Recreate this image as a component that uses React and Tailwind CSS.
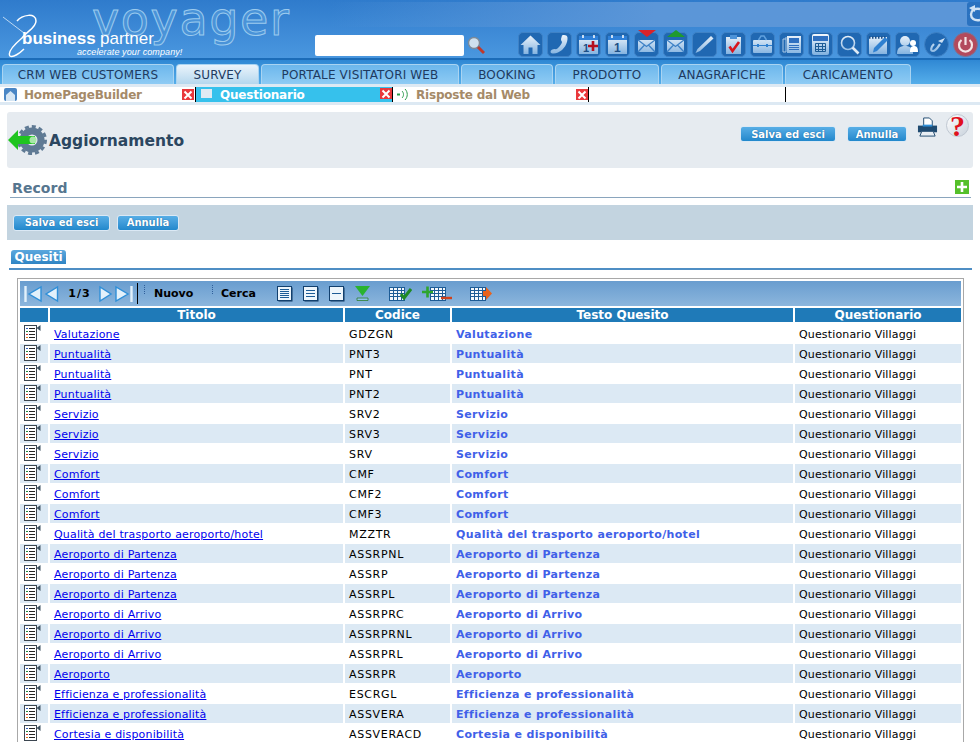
import React from 'react';

const rows = [
  ['Valutazione', 'GDZGN', 'Valutazione'],
  ['Puntualità', 'PNT3', 'Puntualità'],
  ['Puntualità', 'PNT', 'Puntualità'],
  ['Puntualità', 'PNT2', 'Puntualità'],
  ['Servizio', 'SRV2', 'Servizio'],
  ['Servizio', 'SRV3', 'Servizio'],
  ['Servizio', 'SRV', 'Servizio'],
  ['Comfort', 'CMF', 'Comfort'],
  ['Comfort', 'CMF2', 'Comfort'],
  ['Comfort', 'CMF3', 'Comfort'],
  ['Qualità del trasporto aeroporto/hotel', 'MZZTR', 'Qualità del trasporto aeroporto/hotel'],
  ['Aeroporto di Partenza', 'ASSRPNL', 'Aeroporto di Partenza'],
  ['Aeroporto di Partenza', 'ASSRP', 'Aeroporto di Partenza'],
  ['Aeroporto di Partenza', 'ASSRPL', 'Aeroporto di Partenza'],
  ['Aeroporto di Arrivo', 'ASSRPRC', 'Aeroporto di Arrivo'],
  ['Aeroporto di Arrivo', 'ASSRPRNL', 'Aeroporto di Arrivo'],
  ['Aeroporto di Arrivo', 'ASSRPRL', 'Aeroporto di Arrivo'],
  ['Aeroporto', 'ASSRPR', 'Aeroporto'],
  ['Efficienza e professionalità', 'ESCRGL', 'Efficienza e professionalità'],
  ['Efficienza e professionalità', 'ASSVERA', 'Efficienza e professionalità'],
  ['Cortesia e disponibilità', 'ASSVERACD', 'Cortesia e disponibilità'],
];

const tabs = [
  ['CRM WEB CUSTOMERS', 'w-[172px]'],
  ['SURVEY', 'w-[83px]'],
  ['PORTALE VISITATORI WEB', 'w-[198px]'],
  ['BOOKING', 'w-[92px]'],
  ['PRODOTTO', 'w-[104px]'],
  ['ANAGRAFICHE', 'w-[122px]'],
  ['CARICAMENTO', 'w-[126px]'],
];

const W = 'url(#hg)';

function HeaderIcon({ children, round }) {
  return (
    <div className={`w-[25px] h-[25px] shrink-0 border border-[#3f82c6] bg-[#2068b2] flex items-center justify-center ${round ? 'rounded-full' : 'rounded-[5px]'}`}>
      <svg width="21" height="21" viewBox="0 0 21 21">{children}</svg>
    </div>
  );
}

function Envelope() {
  return (
    <HeaderIcon>
      <rect x="2" y="6" width="17" height="12" fill={W} />
      <path d="M2 6l8.5 6.5L19 6M2 18l6.5-7M19 18l-6.5-7" stroke="#3f82c6" strokeWidth="1.3" fill="none" />
    </HeaderIcon>
  );
}

function HeaderIcons() {
  return (
    <div className="flex gap-[4px] items-center">
      <HeaderIcon><path d="M10.5 1.5 L20.5 11 H17.5 V20 H12.5 V13.5 H8.5 V20 H3.5 V11 H0.5 Z" fill={W} /></HeaderIcon>
      <HeaderIcon><path d="M13 1.5 C15 0.5 18 1 18.5 3.5 C19 9 15 16 9 18.5 C6 20 2 20 1.5 18 C1.5 16 3.5 15 6 15 C7.5 15.5 8 15 9 14 C11 12 13 9.5 13 8 C12.5 7 12 6.5 12 5 Z" fill={W} /></HeaderIcon>
      <HeaderIcon>
        <rect x="1" y="2" width="19" height="18" fill={W} /><rect x="1" y="2" width="19" height="4" fill="#2f80d8" />
        <path d="M5 1v3M16 1v3" stroke="#fff" strokeWidth="1.5" />
        <text x="5" y="18" fontSize="11" fontWeight="700" fill="#1d4f86" fontFamily="Liberation Sans">1</text>
        <path d="M10 12h10M15 7v10" stroke="#b5101e" strokeWidth="2.6" />
      </HeaderIcon>
      <HeaderIcon>
        <rect x="1" y="2" width="19" height="18" fill={W} /><rect x="1" y="2" width="19" height="4" fill="#2f80d8" />
        <path d="M5 1v3M16 1v3" stroke="#fff" strokeWidth="1.5" />
        <text x="7" y="18" fontSize="12" fontWeight="700" fill="#1d4f86" fontFamily="Liberation Sans">1</text>
      </HeaderIcon>
      <div className="relative">
        <Envelope />
        <div className="absolute left-[4px] top-[-2px] w-0 h-0 border-l-[9px] border-r-[9px] border-t-[7px] border-l-transparent border-r-transparent border-t-[#d8232a]" />
      </div>
      <div className="relative">
        <Envelope />
        <div className="absolute left-[4px] top-[-2px] w-0 h-0 border-l-[9px] border-r-[9px] border-b-[7px] border-l-transparent border-r-transparent border-b-[#1f9a2e]" />
      </div>
      <HeaderIcon><path d="M17 2l2.5 2.5L6 17l-4.5 2L3.5 15z" fill={W} /></HeaderIcon>
      <HeaderIcon>
        <rect x="3" y="3" width="15" height="17" fill={W} /><rect x="7" y="1" width="7" height="4" fill="#4d93d8" />
        <path d="M6.5 12.5l3 4.5 6.5-9" stroke="#d8141c" strokeWidth="2.6" fill="none" />
      </HeaderIcon>
      <HeaderIcon>
        <rect x="1" y="6" width="19" height="13" rx="1" fill={W} /><path d="M6.5 6l2.5-4h3l2.5 4" stroke="#5fa0de" fill="none" strokeWidth="1.5" />
        <path d="M1 11.5h19" stroke="#2f80d0" /><rect x="5" y="10" width="2" height="3" fill="#2f80d0" /><rect x="14" y="10" width="2" height="3" fill="#2f80d0" />
      </HeaderIcon>
      <HeaderIcon>
        <rect x="6" y="2" width="14" height="17" fill={W} /><path d="M2 5h3v13H2zM4 4h2" fill="none" stroke="#a9c8e6" />
        <rect x="8" y="4" width="10" height="5" fill="#2f70c0" /><path d="M8 11.5h10M8 13.5h10M8 15.5h10" stroke="#2f70c0" />
      </HeaderIcon>
      <HeaderIcon>
        <rect x="2" y="0" width="17" height="21" rx="2" fill={W} /><rect x="3" y="2" width="15" height="5" fill="#2f70c0" />
        <path d="M5.5 9.5h10v8h-10zM5.5 12.5h10M5.5 15.5h10M8.5 9.5v8M12.5 9.5v8" stroke="#1d5c96" fill="none" />
      </HeaderIcon>
      <HeaderIcon><circle cx="9" cy="9" r="6.5" fill="none" stroke={W} strokeWidth="1.6" /><path d="M13.5 13.5l6 6" stroke="#dfeaf5" strokeWidth="2.6" /></HeaderIcon>
      <HeaderIcon>
        <rect x="1" y="3" width="18" height="17" fill={W} /><path d="M1 3.5h18" stroke="#1d4f86" strokeWidth="2.4" strokeDasharray="1.5 1.5" />
        <path d="M20 6L9 17l-4 1.5L6 14 17 3z" fill="#2f80d0" />
      </HeaderIcon>
      <HeaderIcon>
        <circle cx="8" cy="7" r="5" fill={W} /><path d="M0 20c0-6 3-8 8-8s8 2 8 8z" fill={W} />
        <circle cx="16" cy="9" r="3" fill="#fff" /><path d="M13 18c0-4 1-6 4-6s4 2 4 6z" fill="#fff" />
      </HeaderIcon>
      <HeaderIcon round>
        <path d="M8 10C5 13 4 17 7 17C10 17 12 13 14 10" stroke={W} strokeWidth="2.2" fill="none" />
        <path d="M12 7l7-3-3 5z" fill={W} />
      </HeaderIcon>
      <div className="w-[25px] h-[25px] rounded-full bg-[#b34a5c] border border-[#7a7598] flex items-center justify-center">
        <svg width="19" height="19" viewBox="0 0 19 19">
          <path d="M5.5 5a6.5 6.5 0 1 0 8 0" stroke="#f4e4e4" strokeWidth="2.2" fill="none" />
          <path d="M9.5 2v8" stroke="#f4e4e4" strokeWidth="2.2" />
        </svg>
      </div>
    </div>
  );
}

function CloseBox() {
  return (
    <div className="w-[12px] h-[11px] shrink-0 bg-[#e9383c] flex items-center justify-center">
      <svg width="10" height="10" viewBox="0 0 10 10"><path d="M1.5 1.5l7 7M8.5 1.5l-7 7" stroke="#fff" strokeWidth="2" /></svg>
    </div>
  );
}

function BlueBtn({ children, w }) {
  return (
    <button className={`${w} h-[16px] rounded-[3px] border border-[#dbe9f5] bg-gradient-to-b from-[#57aee6] to-[#2188cc] text-white text-[10px] font-bold leading-[13px] text-center [text-shadow:0_0_1px_#0b4f88]`}>
      {children}
    </button>
  );
}

function RowIcon() {
  return (
    <svg width="17" height="16" viewBox="0 0 17 16">
      <rect x="0.5" y="0.5" width="12" height="15" fill="#fff" stroke="#3c4650" />
      <path d="M2 3.5h2" stroke="#2f5fc0" />
      <path d="M2 6.5h2" stroke="#1f8a3a" />
      <path d="M2 9.5h2" stroke="#c03030" />
      <path d="M2 12.5h2" stroke="#e07010" />
      <path d="M5 3.5h6M5 6.5h6M5 9.5h6M5 12.5h6" stroke="#222" />
      <path d="M16.5 0v6l-4-3z" fill="#3c5060" />
    </svg>
  );
}

function TableIcon({ x = 0 }) {
  return (
    <g transform={`translate(${x} 2)`}>
      <rect x="0" y="0.5" width="15" height="13" fill="#f4f8fc" stroke="#1d5c96" />
      <path d="M0 3.5h15M0 6.5h15M0 9.5h15M4 0v14M8 0v14M12 0v14" stroke="#1d5c96" />
    </g>
  );
}

function Lines({ count }) {
  const ys = count === 5 ? [3.5, 5.5, 7.5, 9.5, 11.5] : count === 3 ? [4.5, 7.5, 10.5] : [7.5];
  return (
    <svg width="16" height="16" viewBox="0 0 16 16">
      <rect x="1.5" y="1.5" width="14" height="14" fill="#0e3760" />
      <rect x="0.5" y="0.5" width="14" height="14" fill="#eef6fc" stroke="#12406e" />
      {ys.map((y) => (
        <path key={y} d={`M3 ${y}h9`} stroke="#1d5c96" />
      ))}
    </svg>
  );
}

function Toolbar() {
  return (
    <div className="h-[25px] flex items-center bg-gradient-to-b from-[#699dcf] to-[#8cb6dd] text-[11px] font-bold text-black">
      <svg width="35" height="18" viewBox="0 0 35 18" className="ml-[4px]">
        <path d="M1.5 1v16" stroke="#e3f1fb" strokeWidth="2.4" />
        <path d="M17 2v14L5 9z" fill="#e3f1fb" stroke="#2f8fd8" strokeWidth="1.4" />
        <path d="M33.5 2v14L22 9z" fill="#e3f1fb" stroke="#2f8fd8" strokeWidth="1.4" />
      </svg>
      <span className="ml-[9px] w-[23px] text-center tracking-[1px] pt-[2px]">1/3</span>
      <svg width="34" height="18" viewBox="0 0 34 18" className="ml-[8px]">
        <path d="M1 2v14l11-7z" fill="#e3f1fb" stroke="#2f8fd8" strokeWidth="1.4" />
        <path d="M17 2v14l12-7z" fill="#e3f1fb" stroke="#2f8fd8" strokeWidth="1.4" />
        <path d="M32.5 1v16" stroke="#e3f1fb" strokeWidth="2.4" />
      </svg>
      <div className="ml-[4px] w-px h-[21px] bg-black" />
      <div className="ml-[6px] w-[3px] h-[9px] mb-[8px] border-l border-dotted border-[#2f5f9a]" />
      <span className="ml-[7px] w-[58px] pt-[2px]">Nuovo</span>
      <div className="w-[3px] h-[9px] mb-[8px] border-l border-dotted border-[#2f5f9a]" />
      <span className="ml-[6px] w-[56px] pt-[2px]">Cerca</span>
      <div className="flex items-center gap-[10px]">
        <Lines count={5} />
        <Lines count={3} />
        <Lines count={1} />
      </div>
      <svg width="15" height="17" viewBox="0 0 15 17" className="ml-[10px]">
        <path d="M0 1h15L7.5 11z" fill="#29b32e" />
        <path d="M2 13h11v2.5H2z" fill="#8fc4ea" stroke="#2d7f30" strokeWidth="0.8" />
      </svg>
      <svg width="23" height="18" viewBox="0 0 23 18" className="ml-[19px]">
        <TableIcon x={0.5} />
        <path d="M12 9l3 4 7-9" stroke="#1f8a24" strokeWidth="3" fill="none" />
      </svg>
      <svg width="30" height="18" viewBox="0 0 30 18" className="ml-[10px]">
        <TableIcon x={8.5} />
        <path d="M0 7h11M5.5 1.500v11" stroke="#2ea52e" strokeWidth="2.6" />
        <path d="M19 13h11" stroke="#d0421c" strokeWidth="2.4" />
      </svg>
      <svg width="22" height="18" viewBox="0 0 22 18" className="ml-[18px]">
        <TableIcon x={0.5} />
        <path d="M13 6h3V2l6 6.500-6 6.500v-4h-3z" fill="#e8621c" />
      </svg>
    </div>
  );
}

const gridCols = 'grid grid-cols-[28px_293px_105px_341px_166px] gap-x-[2px]';

export default function App() {
  return (
    <div className="w-[980px] h-[742px] overflow-hidden bg-white font-['DejaVu_Sans',sans-serif] text-[11px] text-black">
      <svg width="0" height="0" className="absolute">
        <defs>
          <linearGradient id="hg" gradientUnits="userSpaceOnUse" x1="0" y1="0" x2="0" y2="21">
            <stop offset="0" stopColor="#f2f7fc" />
            <stop offset="1" stopColor="#7fb0df" />
          </linearGradient>
        </defs>
      </svg>

      {/* top bar */}
      <div className="h-[60px] relative bg-gradient-to-b from-[#2f7bcc] to-[#4a97df] border-b-2 border-[#1c6cb8]">
        <div className="absolute left-[330px] right-0 top-[2px] h-[25px] bg-gradient-to-r from-[#5b96d8]/0 via-[#5b96d8] to-[#5b96d8]" />
        <div className="absolute left-0 top-0 w-[300px] h-[58px] overflow-hidden">
          <span className="absolute left-[92px] top-[2px] text-[46px] leading-[34px] tracking-[1.6px] text-[#4a93d8] [-webkit-text-stroke:1px_#9ccbee]">voyager</span>
          <svg width="50" height="58" viewBox="0 0 50 58" className="absolute left-0 top-0">
            <path d="M3 17L24 33" stroke="#dfeefa" strokeWidth="0.8" />
            <path d="M17 21C22 15 36 12 36 21C36 28 27 31 22 38C15 44 7 52 10 56C13 58 20 53 24 49" stroke="#fff" strokeWidth="1.5" fill="none" />
          </svg>
          <span className="absolute left-[22px] top-[32px] text-[17px] leading-[14px] font-bold text-white font-['Liberation_Sans',sans-serif]">business</span>
          <span className="absolute left-[100px] top-[32px] text-[17px] leading-[14px] text-white font-['Liberation_Sans',sans-serif]">partner</span>
          <span className="absolute left-[77px] top-[47px] text-[9px] leading-[10px] tracking-[0.1px] italic text-white font-['Liberation_Sans',sans-serif]">accelerate your company!</span>
        </div>
        <div className="absolute right-0 top-[2px] w-[13px] h-[24px] bg-[#2a72c0] rounded-l-[3px] overflow-hidden">
          <svg width="13" height="24" viewBox="0 0 13 24">
            <path d="M13 7C7 6 4 9 4 12.500C4 16 7 19 13 18" stroke="#cfe2f4" strokeWidth="2.4" fill="none" />
            <path d="M2 6l6-3v7z" fill="#cfe2f4" />
          </svg>
        </div>
        <div className="h-full flex items-end justify-end pb-[1px] pr-[2px] relative">
          <div className="flex items-center mr-[33px] mb-[1px] gap-[3px]">
            <div className="w-[149px] h-[21px] bg-white rounded-[2px]" />
            <svg width="18" height="20" viewBox="0 0 18 20">
              <circle cx="7" cy="7" r="5.500" fill="#cfe0ee" stroke="#7c8a99" strokeWidth="1.4" />
              <path d="M11 11l6 6" stroke="#c0392b" strokeWidth="3" />
            </svg>
          </div>
          <HeaderIcons />
        </div>
      </div>

      {/* main tabs */}
      <div className="h-[24px] bg-gradient-to-b from-[#2f88d4] to-[#55aeea] flex items-end pl-[2px] gap-[2px]">
        {tabs.map(([t, w]) => (
          <div
            key={t}
            className={`${w} h-[20px] rounded-t-[4px] border-t border-x border-[#a9d4f2] flex items-center justify-center text-[12px] tracking-[0.15px] text-[#1e3a5f] ${t === 'SURVEY' ? 'bg-gradient-to-b from-[#eaf4fb] to-[#b5d7ee]' : 'bg-gradient-to-b from-[#6cb7ec] to-[#8ecbf4]'}`}
          >
            {t}
          </div>
        ))}
      </div>

      {/* open pages */}
      <div className="h-[21px] bg-[#dde9f3] pt-[3px] text-[12px] leading-[15px] font-bold tracking-[-0.2px]">
        <div className="h-[15px] bg-white flex items-center">
          <div className="w-[195px] flex items-center h-full pr-[1px]">
            <div className="w-[13px] h-[13px] ml-[4px] rounded-[2px] bg-[#4a86c5] flex items-end justify-center shrink-0">
              <svg width="11" height="11" viewBox="0 0 11 11"><path d="M5.5 1L10 5v6H1V5z" fill="#d6e6f4" /></svg>
            </div>
            <span className="ml-[7px] pt-[1px] text-[#a58a68] flex-1">HomePageBuilder</span>
            <CloseBox />
          </div>
          <div className="w-[198px] flex items-center h-full bg-[#36c1ec] border-x border-black">
            <div className="w-[11px] h-[9px] ml-[5px] bg-[#dfeaf3] shrink-0 mb-[3px]" />
            <span className="ml-[8px] pt-[1px] text-white flex-1">Questionario</span>
            <div className="mb-[2px]"><CloseBox /></div>
          </div>
          <div className="w-[196px] flex items-center h-full border-r border-black">
            <svg width="13" height="13" viewBox="0 0 13 13" className="ml-[3px] shrink-0">
              <path d="M1 6.500h3" stroke="#2a9a4a" strokeWidth="2" />
              <path d="M6 3c2 2 2 5 0 7M9 1c3 3 3 8 0 11" stroke="#2a9a4a" fill="none" />
            </svg>
            <span className="ml-[7px] pt-[1px] text-[#a58a68] flex-1">Risposte dal Web</span>
            <CloseBox />
          </div>
          <div className="w-[197px] h-full border-r border-black" />
        </div>
      </div>

      {/* title bar */}
      <div className="mt-[7px] ml-[7px] w-[966px] h-[56px] rounded-[3px] bg-[#e6ebf0] flex items-start">
        <svg width="40" height="32" viewBox="0 0 40 32" className="mt-[12px] ml-[1px] shrink-0">
          <circle cx="24" cy="16" r="9" fill="none" stroke="#5f7a94" strokeWidth="7" />
          <circle cx="24" cy="16" r="13.500" fill="none" stroke="#5f7a94" strokeWidth="3" strokeDasharray="4 3" />
          <path d="M0 16L10 6v6h17v8H10v6z" fill="#1fc41f" />
          <circle cx="25" cy="16" r="3.500" fill="#a8e8a8" />
        </svg>
        <span className="ml-[1px] mt-[19px] text-[15.5px] leading-[20px] font-bold text-[#2b4660]">Aggiornamento</span>
        <div className="ml-auto flex items-start mr-[4px]">
          <div className="mt-[14px] flex gap-[11px]">
            <BlueBtn w="w-[96px]">Salva ed esci</BlueBtn>
            <BlueBtn w="w-[60px]">Annulla</BlueBtn>
          </div>
          <svg width="21" height="21" viewBox="0 0 22 22" className="ml-[10px] mt-[5px]">
            <path d="M7 1h6l3 3v6H7z" fill="#fff" stroke="#1f4a70" />
            <path d="M1 9h20v7H1z" fill="#1f4a70" />
            <path d="M6 8h10v2H6z" fill="#2f8fd8" />
            <path d="M5 15h12l2 5H3z" fill="#e8eef4" stroke="#1f4a70" />
          </svg>
          <div className="ml-[8px] mt-[2px] w-[23px] h-[23px] rounded-full bg-gradient-to-br from-white to-[#c9d2dc] border border-[#c0c8d2] flex items-center justify-center text-[30px] leading-none font-bold text-[#e0101c] font-['Liberation_Serif',serif]">?</div>
        </div>
      </div>

      {/* record */}
      <div className="ml-[10px] mr-[9px] mt-[9px] h-[21px] border-b border-[#8aa5bd] flex items-start justify-between">
        <span className="ml-[2px] mt-[1px] text-[14px] leading-[20px] tracking-[0.1px] font-bold text-[#56768f]">Record</span>
        <div className="w-[14px] h-[14px] mt-[3px] mr-[2px] bg-[#55c02a] flex items-center justify-center">
          <svg width="10" height="10" viewBox="0 0 10 10"><path d="M5 0v10M0 5h10" stroke="#fff" strokeWidth="2.6" /></svg>
        </div>
      </div>

      <div className="mt-[7px] ml-[7px] w-[966px] h-[35px] bg-[#c3d4e0] flex items-center pl-[6px] gap-[7px]">
        <BlueBtn w="w-[97px]">Salva ed esci</BlueBtn>
        <BlueBtn w="w-[62px]">Annulla</BlueBtn>
      </div>

      {/* quesiti */}
      <div className="ml-[9px] w-[963px] mt-[10px] h-[20px] border-b-2 border-[#4f8ec4]">
        <div className="ml-[2px] w-[55px] h-[14px] rounded-t-[3px] bg-gradient-to-b from-[#5ba8de] to-[#2f85c4] text-white text-[12px] leading-[15px] font-bold text-center">Quesiti</div>
      </div>

      {/* table */}
      <div className="ml-[17px] mt-[8px] w-[947px] border-t border-x border-[#a8a8a8] p-[2px] pb-0">
        <Toolbar />
        <div className={`${gridCols} mt-[2px] text-white text-[12px] font-bold leading-[15px] text-center`}>
          <div className="bg-[#1f7ab8] h-[14px]" />
          <div className="bg-[#1f7ab8] h-[14px]">Titolo</div>
          <div className="bg-[#1f7ab8] h-[14px]">Codice</div>
          <div className="bg-[#1f7ab8] h-[14px]">Testo Quesito</div>
          <div className="bg-[#1f7ab8] h-[14px]">Questionario</div>
        </div>
        {rows.map((r, i) => {
          const bg = i % 2 === 1 ? 'bg-[#dce9f4]' : 'bg-white';
          return (
            <div key={i} className={`${gridCols} h-[20px] leading-[21px] ${i === 0 ? 'mt-[2px]' : ''}`}>
              <div className={`${bg} h-[19px] pl-[4px] pt-[1px]`}><RowIcon /></div>
              <div className={`${bg} h-[19px] pl-[4px] tracking-[0.17px]`}><a className="text-[#0000ee] underline">{r[0]}</a></div>
              <div className={`${bg} h-[19px] pl-[4px] tracking-[0.7px]`}>{r[1]}</div>
              <div className={`${bg} h-[19px] pl-[4px] tracking-[0.35px] font-bold text-[#4060e8]`}>{r[2]}</div>
              <div className={`${bg} h-[19px] pl-[4px] tracking-[0.15px]`}>Questionario Villaggi</div>
            </div>
          );
        })}
      </div>
    </div>
  );
}
